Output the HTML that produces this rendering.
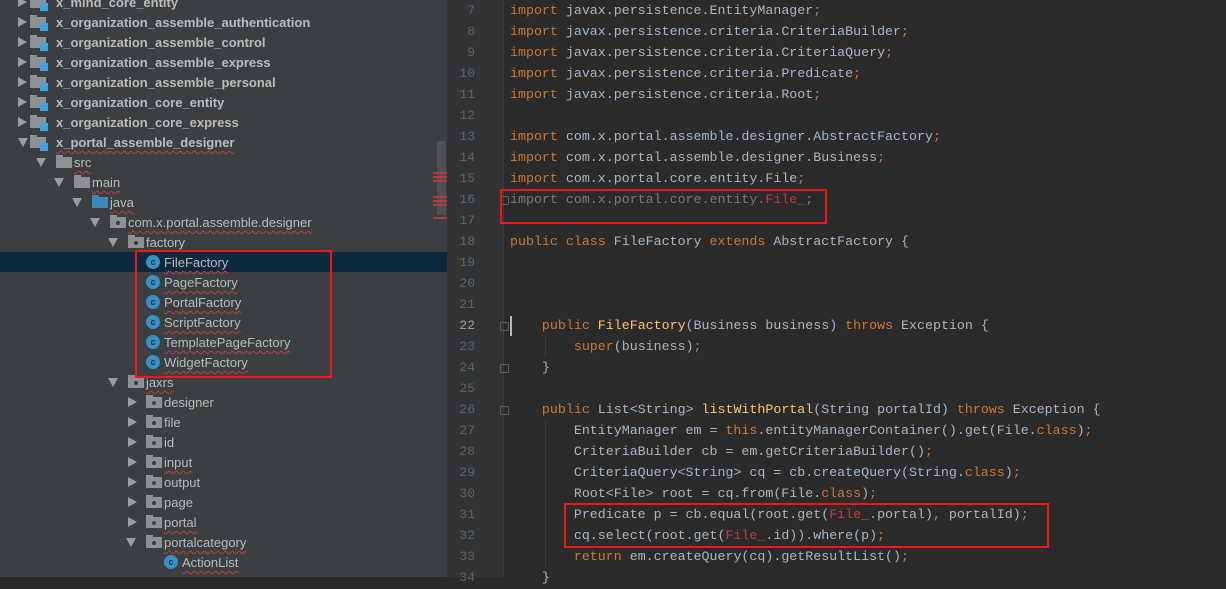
<!DOCTYPE html>
<html><head><meta charset="utf-8"><style>
*{margin:0;padding:0;box-sizing:border-box}
body{width:1226px;height:577px;overflow:hidden;background:#2b2b2b;position:relative;font-family:"Liberation Sans",sans-serif}
#tree{position:absolute;left:0;top:0;width:447px;height:577px;background:#3c3f41;overflow:hidden}
.r{position:absolute;left:0;width:447px;height:20px;font-size:13px;color:#bbbbbb;line-height:20px;white-space:nowrap}
.r.sel{background:#0d293e}
.ar{position:absolute;top:6px;width:0;height:0}
.ar.c{border-top:5px solid transparent;border-bottom:5px solid transparent;border-left:9px solid #9a9da0;top:5px}
.ar.e{border-left:5px solid transparent;border-right:5px solid transparent;border-top:9px solid #9a9da0;top:6px}
.fo{position:absolute;top:5px;width:16px;height:11px;background:#8d9194}
.fo:before{content:"";position:absolute;left:0;top:-2px;width:7px;height:3px;background:#8d9194}
.fo.b{background:#3d89b6}.fo.b:before{background:#3d89b6}
.fo .sq{position:absolute;right:-2px;bottom:-3px;width:8px;height:8px;background:#3fa3e0}
.fo .dt{position:absolute;left:6px;top:4px;width:4px;height:4px;border-radius:2px;background:#3c3f41}
.ci{position:absolute;top:3px;width:14px;height:14px;border-radius:7px;background:#3592c4;color:#2b2b2b;font-size:9px;line-height:14px;text-align:center;font-weight:bold}
.t{position:absolute;top:1px}
.bd{font-weight:bold}
.w{text-decoration:underline wavy #c04040;text-decoration-thickness:1px;text-underline-offset:3px}
#gut{position:absolute;left:447px;top:0;width:57px;height:577px;background:#313335}
.ln{position:absolute;left:447px;width:28px;text-align:right;font-family:"Liberation Mono",monospace;font-size:13px;color:#606366;height:21px;line-height:21px}
.cl{position:absolute;left:510px;font-family:"Liberation Mono",monospace;font-size:13.3px;color:#a9b7c6;height:21px;line-height:22px;white-space:pre}
.k{color:#cc7832}.m{color:#ffc66d}.g{color:#7a7a7a}.rd{color:#bc3f3c}
.box{position:absolute;border:2px solid #f2161c}
.fm{position:absolute;left:500px;width:9px;height:9px;border:1px solid #5a5d60;border-radius:1px}
</style></head><body>
<div id="tree">
<div class="r" style="top:-8px"><div class="ar c" style="left:18px"></div><div class="fo" style="left:30px"><div class="sq"></div></div><span class="t bd" style="left:56px">x_mind_core_entity</span></div>
<div class="r" style="top:12px"><div class="ar c" style="left:18px"></div><div class="fo" style="left:30px"><div class="sq"></div></div><span class="t bd" style="left:56px">x_organization_assemble_authentication</span></div>
<div class="r" style="top:32px"><div class="ar c" style="left:18px"></div><div class="fo" style="left:30px"><div class="sq"></div></div><span class="t bd" style="left:56px">x_organization_assemble_control</span></div>
<div class="r" style="top:52px"><div class="ar c" style="left:18px"></div><div class="fo" style="left:30px"><div class="sq"></div></div><span class="t bd" style="left:56px">x_organization_assemble_express</span></div>
<div class="r" style="top:72px"><div class="ar c" style="left:18px"></div><div class="fo" style="left:30px"><div class="sq"></div></div><span class="t bd" style="left:56px">x_organization_assemble_personal</span></div>
<div class="r" style="top:92px"><div class="ar c" style="left:18px"></div><div class="fo" style="left:30px"><div class="sq"></div></div><span class="t bd" style="left:56px">x_organization_core_entity</span></div>
<div class="r" style="top:112px"><div class="ar c" style="left:18px"></div><div class="fo" style="left:30px"><div class="sq"></div></div><span class="t bd" style="left:56px">x_organization_core_express</span></div>
<div class="r" style="top:132px"><div class="ar e" style="left:18px"></div><div class="fo" style="left:30px"><div class="sq"></div></div><span class="t bd w" style="left:56px">x_portal_assemble_designer</span></div>
<div class="r" style="top:152px"><div class="ar e" style="left:36px"></div><div class="fo" style="left:56px"></div><span class="t w" style="left:74px">src</span></div>
<div class="r" style="top:172px"><div class="ar e" style="left:54px"></div><div class="fo" style="left:74px"></div><span class="t w" style="left:92px">main</span></div>
<div class="r" style="top:192px"><div class="ar e" style="left:72px"></div><div class="fo b" style="left:92px"></div><span class="t w" style="left:110px">java</span></div>
<div class="r" style="top:212px"><div class="ar e" style="left:90px"></div><div class="fo" style="left:110px"><div class="dt"></div></div><span class="t w" style="left:128px">com.x.portal.assemble.designer</span></div>
<div class="r" style="top:232px"><div class="ar e" style="left:108px"></div><div class="fo" style="left:128px"><div class="dt"></div></div><span class="t" style="left:146px">factory</span></div>
<div class="r sel" style="top:252px"><div class="ci" style="left:146px">c</div><span class="t w" style="left:164px">FileFactory</span></div>
<div class="r" style="top:272px"><div class="ci" style="left:146px">c</div><span class="t w" style="left:164px">PageFactory</span></div>
<div class="r" style="top:292px"><div class="ci" style="left:146px">c</div><span class="t w" style="left:164px">PortalFactory</span></div>
<div class="r" style="top:312px"><div class="ci" style="left:146px">c</div><span class="t w" style="left:164px">ScriptFactory</span></div>
<div class="r" style="top:332px"><div class="ci" style="left:146px">c</div><span class="t w" style="left:164px">TemplatePageFactory</span></div>
<div class="r" style="top:352px"><div class="ci" style="left:146px">c</div><span class="t w" style="left:164px">WidgetFactory</span></div>
<div class="r" style="top:372px"><div class="ar e" style="left:108px"></div><div class="fo" style="left:128px"><div class="dt"></div></div><span class="t w" style="left:146px">jaxrs</span></div>
<div class="r" style="top:392px"><div class="ar c" style="left:128px"></div><div class="fo" style="left:146px"><div class="dt"></div></div><span class="t" style="left:164px">designer</span></div>
<div class="r" style="top:412px"><div class="ar c" style="left:128px"></div><div class="fo" style="left:146px"><div class="dt"></div></div><span class="t" style="left:164px">file</span></div>
<div class="r" style="top:432px"><div class="ar c" style="left:128px"></div><div class="fo" style="left:146px"><div class="dt"></div></div><span class="t" style="left:164px">id</span></div>
<div class="r" style="top:452px"><div class="ar c" style="left:128px"></div><div class="fo" style="left:146px"><div class="dt"></div></div><span class="t w" style="left:164px">input</span></div>
<div class="r" style="top:472px"><div class="ar c" style="left:128px"></div><div class="fo" style="left:146px"><div class="dt"></div></div><span class="t" style="left:164px">output</span></div>
<div class="r" style="top:492px"><div class="ar c" style="left:128px"></div><div class="fo" style="left:146px"><div class="dt"></div></div><span class="t" style="left:164px">page</span></div>
<div class="r" style="top:512px"><div class="ar c" style="left:128px"></div><div class="fo" style="left:146px"><div class="dt"></div></div><span class="t w" style="left:164px">portal</span></div>
<div class="r" style="top:532px"><div class="ar e" style="left:126px"></div><div class="fo" style="left:146px"><div class="dt"></div></div><span class="t w" style="left:164px">portalcategory</span></div>
<div class="r" style="top:552px"><div class="ci" style="left:164px">c</div><span class="t w" style="left:182px">ActionList</span></div>
<div style="position:absolute;left:437px;top:141px;width:9px;height:74px;background:#4f5254"></div>
<div style="position:absolute;left:433px;top:172px;width:14px;height:12px;background:repeating-linear-gradient(#b23a3a 0 2px,transparent 2px 4px)"></div>
<div style="position:absolute;left:433px;top:196px;width:14px;height:10px;background:repeating-linear-gradient(#b23a3a 0 2px,transparent 2px 4px)"></div>
<div style="position:absolute;left:433px;top:217px;width:14px;height:2px;background:#b23a3a"></div>
</div>
<div id="gut"></div>
<div style="position:absolute;left:503px;top:0;width:1px;height:577px;background:#3a3a3a"></div>
<div style="position:absolute;left:510px;top:316px;width:2px;height:20px;background:#bbbbbb"></div>
<div class="fm" style="top:196px"></div>
<div class="fm" style="top:322px"></div>
<div class="fm" style="top:364px"></div>
<div class="fm" style="top:406px"></div>
<div class="ln" style="top:0px">7</div><div class="cl" style="top:0px"><span class="k">import</span> javax.persistence.EntityManager<span class="k">;</span></div>
<div class="ln" style="top:21px">8</div><div class="cl" style="top:21px"><span class="k">import</span> javax.persistence.criteria.CriteriaBuilder<span class="k">;</span></div>
<div class="ln" style="top:42px">9</div><div class="cl" style="top:42px"><span class="k">import</span> javax.persistence.criteria.CriteriaQuery<span class="k">;</span></div>
<div class="ln" style="top:63px">10</div><div class="cl" style="top:63px"><span class="k">import</span> javax.persistence.criteria.Predicate<span class="k">;</span></div>
<div class="ln" style="top:84px">11</div><div class="cl" style="top:84px"><span class="k">import</span> javax.persistence.criteria.Root<span class="k">;</span></div>
<div class="ln" style="top:105px">12</div>
<div class="ln" style="top:126px">13</div><div class="cl" style="top:126px"><span class="k">import</span> com.x.portal.assemble.designer.AbstractFactory<span class="k">;</span></div>
<div class="ln" style="top:147px">14</div><div class="cl" style="top:147px"><span class="k">import</span> com.x.portal.assemble.designer.Business<span class="k">;</span></div>
<div class="ln" style="top:168px">15</div><div class="cl" style="top:168px"><span class="k">import</span> com.x.portal.core.entity.File<span class="k">;</span></div>
<div class="ln" style="top:189px">16</div><div class="cl" style="top:189px"><span class="g">import com.x.portal.core.entity.</span><span class="rd">File_</span><span class="g">;</span></div>
<div class="ln" style="top:210px">17</div>
<div class="ln" style="top:231px">18</div><div class="cl" style="top:231px"><span class="k">public class</span> FileFactory <span class="k">extends</span> AbstractFactory {</div>
<div class="ln" style="top:252px">19</div>
<div class="ln" style="top:273px">20</div>
<div class="ln" style="top:294px">21</div>
<div class="ln" style="top:315px;color:#a4a3a3">22</div><div class="cl" style="top:315px">    <span class="k">public</span> <span class="m">FileFactory</span>(Business business) <span class="k">throws</span> Exception {</div>
<div class="ln" style="top:336px">23</div><div class="cl" style="top:336px">        <span class="k">super</span>(business)<span class="k">;</span></div>
<div class="ln" style="top:357px">24</div><div class="cl" style="top:357px">    }</div>
<div class="ln" style="top:378px">25</div>
<div class="ln" style="top:399px">26</div><div class="cl" style="top:399px">    <span class="k">public</span> List&lt;String&gt; <span class="m">listWithPortal</span>(String portalId) <span class="k">throws</span> Exception {</div>
<div class="ln" style="top:420px">27</div><div class="cl" style="top:420px">        EntityManager em = <span class="k">this</span>.entityManagerContainer().get(File.<span class="k">class</span>)<span class="k">;</span></div>
<div class="ln" style="top:441px">28</div><div class="cl" style="top:441px">        CriteriaBuilder cb = em.getCriteriaBuilder()<span class="k">;</span></div>
<div class="ln" style="top:462px">29</div><div class="cl" style="top:462px">        CriteriaQuery&lt;String&gt; cq = cb.createQuery(String.<span class="k">class</span>)<span class="k">;</span></div>
<div class="ln" style="top:483px">30</div><div class="cl" style="top:483px">        Root&lt;File&gt; root = cq.from(File.<span class="k">class</span>)<span class="k">;</span></div>
<div class="ln" style="top:504px">31</div><div class="cl" style="top:504px">        Predicate p = cb.equal(root.get(<span class="rd">File_</span>.portal)<span class="k">,</span> portalId)<span class="k">;</span></div>
<div class="ln" style="top:525px">32</div><div class="cl" style="top:525px">        cq.select(root.get(<span class="rd">File_</span>.id)).where(p)<span class="k">;</span></div>
<div class="ln" style="top:546px">33</div><div class="cl" style="top:546px">        <span class="k">return</span> em.createQuery(cq).getResultList()<span class="k">;</span></div>
<div class="ln" style="top:567px">34</div><div class="cl" style="top:567px">    }</div>
<div style="position:absolute;left:545px;top:336px;width:1px;height:21px;background:#3b3b3b"></div>
<div style="position:absolute;left:545px;top:420px;width:1px;height:147px;background:#3b3b3b"></div>
<div class="box" style="left:500px;top:189px;width:327px;height:35px"></div>
<div class="box" style="left:135px;top:250px;width:197px;height:128px"></div>
<div class="box" style="left:564px;top:503px;width:485px;height:45px"></div>
</body></html>
